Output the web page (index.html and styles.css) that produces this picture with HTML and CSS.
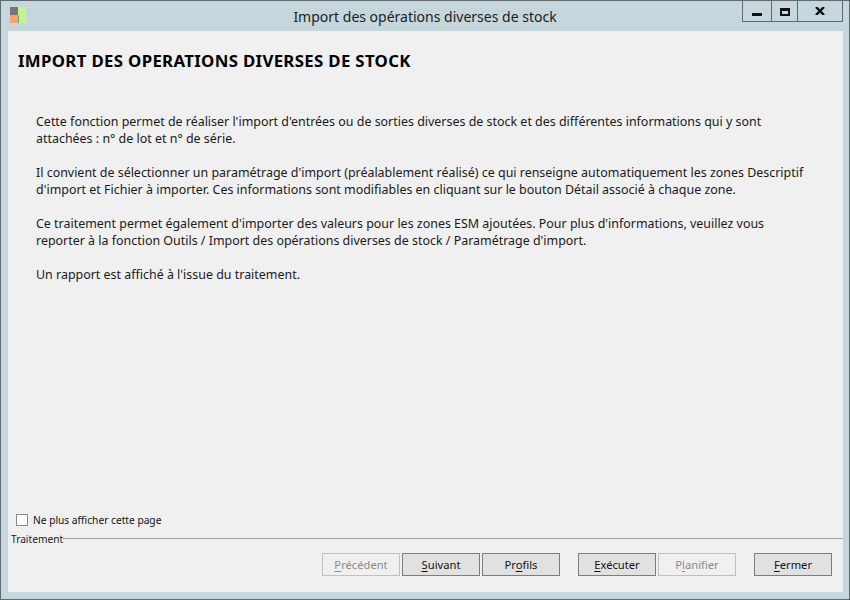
FILE: index.html
```html
<!DOCTYPE html>
<html lang="fr">
<head>
<meta charset="utf-8">
<title>Import des opérations diverses de stock</title>
<link rel="stylesheet" href="styles.css">
</head>
<body>
<div class="window">
  <header class="titlebar">
    <svg class="app-icon" width="16" height="16" viewBox="0 0 16 16">
      <rect x="0" y="0" width="8" height="8" fill="#777"/>
      <rect x="0" y="8" width="8" height="8" fill="#f7a26b"/>
      <rect x="8" y="0" width="8" height="16" fill="#c4f58c"/>
      <rect x="8" y="8" width="1" height="8" fill="#8a9a80"/>
    </svg>
    <div class="title">Import des opérations diverses de stock</div>
    <div class="controls">
      <div class="ctl ctl-min"><span class="min-glyph"></span></div>
      <div class="ctl ctl-max"><span class="max-glyph"></span></div>
      <div class="ctl ctl-close"><svg width="10" height="8" viewBox="0 0 10 8"><path d="M1 0L9 8M9 0L1 8" stroke="#111" stroke-width="2.4" fill="none"/></svg></div>
    </div>
  </header>
  <main class="content">
    <h1 class="heading">IMPORT DES OPERATIONS DIVERSES DE STOCK</h1>
    <div class="desc">
      <p>Cette fonction permet de réaliser l'import d'entrées ou de sorties diverses de stock et des différentes informations qui y sont<br>attachées : n° de lot et n° de série.</p>
      <p>Il convient de sélectionner un paramétrage d'import (préalablement réalisé) ce qui renseigne automatiquement les zones Descriptif<br>d'import et Fichier à importer. Ces informations sont modifiables en cliquant sur le bouton Détail associé à chaque zone.</p>
      <p>Ce traitement permet également d'importer des valeurs pour les zones ESM ajoutées. Pour plus d'informations, veuillez vous<br>reporter à la fonction Outils / Import des opérations diverses de stock / Paramétrage d'import.</p>
      <p>Un rapport est affiché à l'issue du traitement.</p>
    </div>
    <label class="check"><span class="box"></span><span>Ne plus afficher cette page</span></label>
    <div class="group"><span class="group-label">Traitement</span><span class="group-line"></span></div>
    <div class="buttons">
      <div class="btn disabled"><u>P</u>récédent</div>
      <div class="btn"><u>S</u>uivant</div>
      <div class="btn">Pr<u>o</u>fils</div>
      <div class="btn sep-a"><u>E</u>xécuter</div>
      <div class="btn disabled">P<u>l</u>anifier</div>
      <div class="btn sep-b"><u>F</u>ermer</div>
    </div>
  </main>
</div>
</body>
</html>
```
FILE: styles.css
```css
* { box-sizing: border-box; }
html, body { margin: 0; height: 100%; }
body { width: 850px; height: 600px; overflow: hidden; font-family: "Noto Sans", sans-serif; color: #111; }
.window { width: 850px; height: 600px; display: flex; flex-direction: column; background: #c5d6dd; border: 1px solid #5f6a70; padding: 0 6px 7px 7px; }
.titlebar { height: 30px; flex: none; display: flex; align-items: flex-start; position: relative; }
.app-icon { margin: 6px 0 0 2px; flex: none; }
.title { position: absolute; left: 0; right: 0; top: 6px; text-align: center; font-size: 14px; line-height: 19px; color: #1c1c1c; padding-right: 1px; }
.controls { position: absolute; right: 0; top: 0; display: flex; height: 21px; border: 1px solid #5f6a70; border-top: 0; }
.ctl { display: flex; align-items: center; justify-content: center; height: 20px; }
.ctl-min { width: 29px; border-right: 1px solid #5f6a70; }
.ctl-max { width: 26px; border-right: 1px solid #5f6a70; }
.ctl-close { width: 44px; }
.min-glyph { width: 10px; height: 3px; background: #111; margin-top: 7px; }
.max-glyph { width: 10px; height: 8px; border: 2px solid #111; border-top-width: 3px; margin-top: 2px; }
.content { flex: 1; background: #f0f0f0; display: flex; flex-direction: column; min-height: 0; padding: 0 2px; }
.heading { margin: 20px 0 0 8px; font-family: "Noto Sans", sans-serif; font-size: 16.8px; letter-spacing: 0.33px; line-height: 20px; font-weight: 700; color: #000; }
.desc { margin: 42px 0 0 26px; font-size: 12.45px; line-height: 17px; flex: 1; color: #1a1a1a; }
.desc p { margin: 0 0 17px; white-space: nowrap; }
.check { display: flex; align-items: center; gap: 5px; margin: 0 0 5px 6px; font-size: 10.2px; line-height: 14px; color: #111; }
.box { width: 12px; height: 12px; background: #fff; border: 1px solid #8a8a8a; }
.group { display: flex; align-items: center; height: 14px; margin: 0 -2px 0 1px; font-size: 10.2px; }
.group-label { line-height: 14px; color: #222; }
.group-line { flex: 1; height: 1px; background: #a0a0a0; margin-top: -2px; }
.buttons { display: flex; justify-content: flex-end; gap: 2px; margin: 7px 9px 16px 0; }
.btn { width: 78px; height: 23px; border: 1px solid #7d7d7d; background: #e1e1e1; font-size: 11.2px; line-height: 21px; text-align: center; color: #111; }
.btn u { text-underline-offset: 2px; }
.btn.disabled { background: #f0f0f0; border-color: #c0c0c0; color: #8a8a8a; }
.sep-a { margin-left: 16px; }
.sep-b { margin-left: 16px; }
```
